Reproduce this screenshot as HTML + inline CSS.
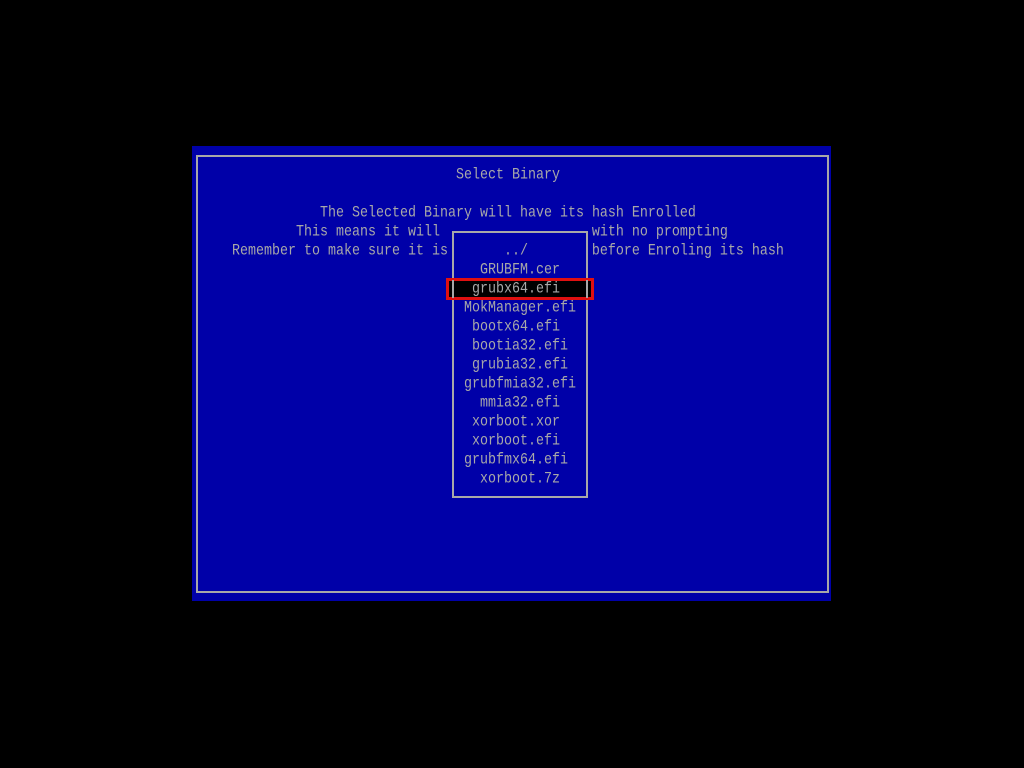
<!DOCTYPE html>
<html><head><meta charset="utf-8"><style>
html,body{margin:0;padding:0;background:#000;width:1024px;height:768px;overflow:hidden}
.p{position:absolute;left:192px;top:146px;width:639px;height:455px;background:#0000a8}
.fr{position:absolute;left:196px;top:155px;width:629px;height:434px;border:2px solid #a8a8a8}
.t{position:absolute;font-family:"Liberation Mono",monospace;font-size:13.33px;line-height:19px;height:19px;color:#a8a8a8;white-space:pre;transform:scaleY(1.2);transform-origin:50% 50%}
.lb{position:absolute;left:452px;top:231px;width:132px;height:263px;border:2px solid #a8a8a8;background:#0000a8}
.hl{position:absolute;left:446px;top:278px;width:142px;height:16px;border:3px solid #e01010;background:#000}
.hlb{position:absolute;top:280px;width:2px;height:18px;background:#a8a8a8}
</style></head><body>
<div class="p"></div>
<div class="fr"></div>
<div class="t" style="left:456px;top:166px">Select Binary</div>
<div class="t" style="left:320px;top:204px">The Selected Binary will have its hash Enrolled</div>
<div class="t" style="left:296px;top:223px">This means it will                   with no prompting</div>
<div class="t" style="left:232px;top:242px">Remember to make sure it is                  before Enroling its hash</div>
<div class="lb"></div>
<div class="hl"></div>
<div class="hlb" style="left:452px"></div>
<div class="hlb" style="left:586px"></div>
<div class="t" style="left:504px;top:242px">../</div>
<div class="t" style="left:480px;top:261px">GRUBFM.cer</div>
<div class="t" style="left:472px;top:280px">grubx64.efi</div>
<div class="t" style="left:464px;top:299px">MokManager.efi</div>
<div class="t" style="left:472px;top:318px">bootx64.efi</div>
<div class="t" style="left:472px;top:337px">bootia32.efi</div>
<div class="t" style="left:472px;top:356px">grubia32.efi</div>
<div class="t" style="left:464px;top:375px">grubfmia32.efi</div>
<div class="t" style="left:480px;top:394px">mmia32.efi</div>
<div class="t" style="left:472px;top:413px">xorboot.xor</div>
<div class="t" style="left:472px;top:432px">xorboot.efi</div>
<div class="t" style="left:464px;top:451px">grubfmx64.efi</div>
<div class="t" style="left:480px;top:470px">xorboot.7z</div>
</body></html>
